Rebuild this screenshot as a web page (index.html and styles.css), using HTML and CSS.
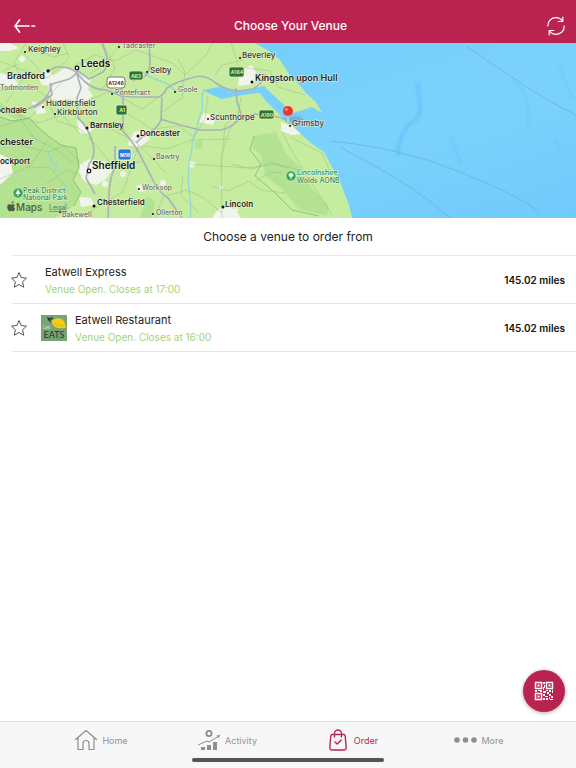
FILE: index.html
```html
<!DOCTYPE html>
<html lang="en">
<head>
<meta charset="utf-8">
<meta name="viewport" content="width=device-width, initial-scale=1">
<title>Choose Your Venue</title>
<link rel="stylesheet" href="styles.css">
</head>
<body>
<header class="topbar">
  <button class="icon-button" type="button" aria-label="Back">
    <svg width="24" height="18" viewBox="0 0 24 18" fill="none" stroke="#fff" stroke-width="1.700" stroke-linecap="round" stroke-linejoin="round"><path d="M6.500 3L2 9l4.500 6M2 9h14M19 9h2.500"/></svg>
  </button>
  <h1 class="title">Choose Your Venue</h1>
  <button class="icon-button" type="button" aria-label="Refresh">
    <svg width="20" height="22" viewBox="0 0 20 22" fill="none" stroke="#fff" stroke-width="1.200" stroke-linecap="round" stroke-linejoin="round"><path d="M1.800 11C1.500 6 5.500 2.700 10 2.700c3 0 5 1.300 6.500 3.500M16.800 2v4.500h-4.500M18.200 11c.3 5-3.700 8.300-8.200 8.300-3 0-5-1.300-6.500-3.500M3.200 20v-4.500h4.500"/></svg>
  </button>
</header>

<main>
  <svg class="map" viewBox="0 43 576 175" role="img" aria-label="Map of venues">
    <defs>
      <linearGradient id="sea" x1="0" y1="0" x2="1" y2="1"><stop offset="0" stop-color="#72cbfb"/><stop offset=".6" stop-color="#7bd2fc"/><stop offset="1" stop-color="#70cafb"/></linearGradient>
      <filter id="soft" x="-50%" y="-50%" width="200%" height="200%"><feGaussianBlur stdDeviation="1.500"/></filter>
    </defs>
    <rect y="43" width="576" height="175" fill="url(#sea)"/>
    <g fill="none" stroke="#52b8f2" filter="url(#soft)" opacity=".45">
      <path d="M418 82c0 18 6 30-3 38-8 6-17 14-17 36" stroke-width="4"/>
      <path d="M512 80c12 5 18 25 17 48M560 65c2 15 8 25 14 33M555 138l4 12M450 137l12 28" stroke-width="1.500"/>
    </g>
    <g fill="none" stroke="#579fc0" stroke-width=".6" opacity=".7">
      <path d="M466 46c35 23 70 50 110 69M330 141c50 5 87 14 130 31 35 14 60 26 78 39M340 147c40 22 76 40 110 71"/>
    </g>
    <path fill="#c6ec9f" d="M0 43h255l14 8 11 9 9 14 8 8 9 11 10 9 6 11-10-6-9 3-10 3-10-9-11-10-8-8-8 2-16 2-12-1-9-2-16 3 7 4 12 5 14-3 14-2 10-1 6 8 7 7 10 10 7 5 12 12 10 9 12 8 8 15 8 15 8 20 5 18H0z"/>
    <g fill="#a9df8c" opacity=".65">
      <path d="M0 117l12 4 17-3 12 12 10 8 10 7 15 3 3 19-6 13 8 12-7 14-20 12H0V193z"/>
      <path d="M254 136l22-4 10 22 14 13 12 21 17 18-2 10-27-6-18-21-17-13-4-20-8-8zM147 196l8 6-3 16h-12zM195 143l7-4v9l-7 1zM0 103l26 14-10 2-16-7z"/>
    </g>
    <g fill="#f1f4ec">
      <path d="M54 75l12-8 13 4 12 8-3 10 5 7-9 6-16-3-15 2-6-8zM38 77l9-8 7 7-3 10-9-1zM80 164l10-5 16 3 6 9-7 9-9 5-12-4-5-9zM0 73l12 3 7 8-8 5-11-3zM0 154l10 5 3 14-13 12zM134 132l12-3 4 10-10 8-13-2zM240 70l12-5 6 11-4 8-16 2zM204 113l13 3-4 9-14-3zM281 122l11 4 9 8-9 1-11-4zM214 214l9-8 12 3 6 9h-28zM0 43h10l9 5-9 3H0zM31 101l12 3 3 9-9 1zM77 119l10 8 8-1-7 8-9-1zM136 186l7-2 2 7-6 1zM190 161l6 2-3 5-5-2zM79 197l12 1 3 7-13 2z"/>
      <circle cx="22" cy="59" r="3"/><circle cx="123" cy="174" r="3"/><circle cx="221" cy="188" r="2"/><circle cx="163" cy="183" r="3"/><circle cx="236" cy="210" r="2"/><circle cx="105" cy="184" r="3"/>
    </g>
    <g fill="none" stroke="#8fd7db" stroke-width="1.200">
      <path d="M204 89c-5 12 2 18-4 26-3 14-5 20-8 27 2 10-5 18-3 28-4 15 5 31 1 48M48 152l5 13M57 164l-2 8M143 72c10 9 18 7 26 13l8 7"/>
    </g>
    <g fill="none" stroke="#93a982" stroke-width=".5" opacity=".75" stroke-linejoin="round">
      <path d="M0 61l23 9 25 8 21-20-6-15M26 43L14 63l8 17-16 23M0 91l28-5 28 15 21 1M48 101l9 20 22 7 19 19 13 17 31-2M0 126l30-8 15-18 16-17M46 78l-13-15-10-10M90 74l18-13 12-18M74 66l21-11 20 6 21-11 36 13 13 12 21-20 9-16M103 43l12 25-12 21M120 109l32 20 27-3 15 11 11-18 3-23M122 160l21-14 24 3 25-9 39-1M111 129l25 13 31 32M139 144l-9 27-7 21-21 12-22 14M155 218l8-21 24-7 17 8 18 15M190 164l58 4 26-4 27 6M222 218l-1-61 8-26 8-12 4-21M241 111l-16 14-4 46M231 43l8 24 31 4 8 16 27 8M12 154l18 14 19-1 17 20-2 31M0 179l30-13 17-25M19 116l15 22 23 12 16 13M91 99l20-8 31 18 24-17M183 175l-2 20 17 17M282 132l13 25 23 36 14 22M290 137l32 16 11 25"/>
      <path d="M20 145l28 7 16-6 20 20M10 110l28 13 24-8 18 19M35 48l18 9 16-4M3 71l15-7M46 184l21-14 14 6M215 75l7-10 21-5M231 164l22 5 18-7 16 6M257 181l13-9 13 1M211 186l17 5 21-10 12 9 24 3M178 59l7 13-3 26-20 14"/>
    </g>
    <g fill="none" stroke="#aab3b8" stroke-width="1.700" stroke-linejoin="round">
      <path d="M28 109Q46 101 49 92l3-8 14-4q6-1 12-9l11 8 14-7q7-8 3-18l-4-11M48 71l8-4q14-1 21 6l7 8q10 9 22 9l15 6 12 1h25q4 0 9-9 8-6 28-11 10-3 21 6 8 7 24 8l13-2q8-4 13-15M77 74l4 14-4 10 1 20q10 8 15 26 3 12-4 20l-3 14q5 9 9 16M50 83l2 12-18 13M162 97l-1 23q-3 9-19 17l-6 6M160 119l24 7 16 4h21q12-3 18-11l16-5 22 3q8 1 12 7M236 88l1 14 5 15M149 43l1 18q0 14-8 17l-10 3M119 79l4 16v36q6 6 15 20l14 27q6 14 16 20l14 20M115 146v20q-6 15-6 30l-1 22"/>
    </g>
    <path fill="none" stroke="#83b66c" stroke-width=".8" d="M0 117l12 4 17-3 12 12 10 8 10 7 15 3 3 19-6 13 8 12-7 14M254 136l-4 14 11 14-6 12 18 15 19 19 27 6"/>

    <g class="shields">
      <g fill="#24734a" stroke="#e9ed9e" stroke-width=".8"><rect x="129" y="71" width="14" height="9" rx="2"/><rect x="116" y="105" width="11" height="10" rx="2"/><rect x="229" y="67" width="15" height="10" rx="2"/><rect x="259" y="110" width="15" height="9" rx="2"/></g>
      <rect x="107" y="77" width="18" height="11" rx="3" fill="#fff" stroke="#777"/>
      <rect x="118" y="149" width="13" height="11" rx="2" fill="#2979db" stroke="#fff" stroke-width=".7"/>
      <g class="shield-text"><text x="136" y="78">A63</text><text x="122" y="112">A1</text><text x="237" y="74">A164</text><text x="267" y="117">A180</text></g>
      <text class="shield-dark" x="116" y="85">A1246</text>
      <text class="shield-light" x="125" y="157">M18</text>
    </g>
    <g fill="#111">
      <circle cx="25" cy="52" r="1"/><circle cx="48" cy="71" r="1.700"/><circle cx="43" cy="107" r="1"/><circle cx="55" cy="114" r="1"/><circle cx="87" cy="128" r="1.500"/><circle cx="119" cy="47" r="1"/><circle cx="147" cy="72" r="1"/><circle cx="112" cy="94" r="1"/><circle cx="175" cy="92" r="1"/><circle cx="208" cy="119" r="1"/><circle cx="138" cy="136" r="1.500"/><circle cx="240" cy="58" r="1"/><circle cx="252" cy="82" r="1.500"/><circle cx="290" cy="126" r="1"/><circle cx="154" cy="159" r="1"/><circle cx="139" cy="189" r="1"/><circle cx="94" cy="206" r="1.500"/><circle cx="153" cy="214" r="1"/><circle cx="223" cy="207" r="1.500"/><circle cx="60" cy="212" r="1"/>
      <g fill="#fff" stroke="#111" stroke-width="1.300"><circle cx="77" cy="68" r="1.800"/><circle cx="89" cy="171" r="1.800"/></g>
    </g>
    <g class="town">
      <text x="28" y="52">Keighley</text><text x="46" y="106">Huddersfield</text><text x="57" y="115">Kirkburton</text><text x="150" y="73">Selby</text><text x="210" y="120">Scunthorpe</text><text x="242" y="58">Beverley</text><text x="292" y="126">Grimsby</text>
      <g class="minor"><text x="0" y="90">Todmorden</text><text x="122" y="48">Tadcaster</text><text x="115" y="95">Pontefract</text><text x="178" y="92">Goole</text><text x="156" y="159">Bawtry</text><text x="142" y="190">Worksop</text><text x="156" y="215">Ollerton</text><text x="62" y="217">Bakewell</text></g>
    </g>
    <g class="large-town"><text x="90" y="128">Barnsley</text><text x="140" y="136">Doncaster</text><text x="97" y="205">Chesterfield</text><text x="225" y="207">Lincoln</text><text x="-4" y="113">ochdale</text><text x="0" y="164">ockport</text><g class="major"><text x="7" y="79">Bradford</text><text x="255" y="81">Kingston upon Hull</text></g></g>
    <g class="city"><text x="81" y="67">Leeds</text><text x="92" y="169">Sheffield</text><text class="chester" x="0" y="145">chester</text></g>
    <g class="park"><text x="23" y="193">Peak District</text><text x="23" y="200">National Park</text><text x="297" y="175">Lincolnshire</text><text x="297" y="183">Wolds AONB</text></g>
    <g fill="#35a653" stroke="#e5f6d5" stroke-width=".5"><circle cx="18" cy="193" r="5"/><circle cx="291" cy="176" r="5"/></g>
    <g fill="#fff"><path d="M18 189l-2.500 5h5zM17.500 194h1v2h-1z"/><ellipse cx="291" cy="175" rx="2.500" ry="2"/><path d="M290.500 176h1v3h-1z"/></g>
    <ellipse cx="294" cy="119" rx="9" ry="3" fill="#536a75" opacity=".3" filter="url(#soft)"/>
    <path d="M288 115v8" stroke="#eee"/>
    <circle cx="288" cy="111" r="5" fill="#ee352f"/><circle cx="286.500" cy="109.500" r="1.300" fill="#ff9b8b"/>
    <path fill="#4d5b43" d="M11.500 203.700c.1-1.500 1-2.300 2.100-2.700.1 1.500-.8 2.600-2.100 2.700zM11.200 204.700c.8 0 1.100-.5 2-.5.8 0 1.300.4 1.700.9-1.500 1-1.200 3.100.3 3.700-.6 1.500-1.300 2.500-2.100 2.500-.7 0-1-.4-1.800-.4s-1 .4-1.700.4c-1.800 0-3.500-5.200-1.300-6.700 1.200-.8 2.200.1 2.900.1z"/>
    <text class="maps-brand" x="16" y="211">Maps</text>
    <text class="legal" x="49" y="210">Legal</text>
  </svg>

  <section class="venues">
    <h2 class="prompt">Choose a venue to order from</h2>
    <ul class="list">
      <li class="venue">
        <button class="star" type="button" aria-label="Favourite Eatwell Express"><svg width="18" height="18" viewBox="0 0 18 18" fill="none" stroke="#555" stroke-linejoin="round"><path d="M9 1.500l2.200 5 5.300.6-3.900 3.700 1.100 5.400L9 13.500l-4.700 2.700 1.100-5.400-3.900-3.700 5.300-.6z"/></svg></button>
        <div class="details plain"><h3>Eatwell Express</h3><p>Venue Open. Closes at 17:00</p></div>
        <span class="distance">145.02 miles</span>
      </li>
      <li class="venue">
        <button class="star" type="button" aria-label="Favourite Eatwell Restaurant"><svg width="18" height="18" viewBox="0 0 18 18" fill="none" stroke="#555" stroke-linejoin="round"><path d="M9 1.500l2.200 5 5.300.6-3.900 3.700 1.100 5.400L9 13.500l-4.700 2.700 1.100-5.400-3.900-3.700 5.300-.6z"/></svg></button>
        <svg class="logo" width="26" height="26" viewBox="0 0 26 26"><rect width="26" height="26" fill="#76a477"/><path fill="#f5cb16" d="M11 6c2-3 8-4 11-1 2 2 2 4 3 8-4 0-8 1-11-1-2-1-3-3-3-6z"/><path fill="none" stroke="#c7a516" stroke-width=".5" d="M13 8c3 3 7 3 10 3"/><path fill="#253a2a" d="M6 2l3 1 3-1-1 3-2-1 1 4-3-3z"/><text class="logo-small" x="2" y="14">Les</text><text class="logo-name" x="13" y="23">EATS</text></svg>
        <div class="details"><h3>Eatwell Restaurant</h3><p>Venue Open. Closes at 16:00</p></div>
        <span class="distance">145.02 miles</span>
      </li>
    </ul>
  </section>
</main>

<button class="scan" type="button" aria-label="Scan QR code">
  <svg width="20" height="20" viewBox="0 0 20 20"><g fill="none" stroke="#fff" stroke-width="1.500"><path d="M1.500 1.500h6v6h-6zM12.500 1.500h6v6h-6zM1.500 12.500h6v6h-6z"/></g><path fill="#fff" d="M3.500 3.500h2v2h-2zM14.500 3.500h2v2h-2zM3.500 14.500h2v2h-2zM9 1h2v2H9zM10 4h1v3h-1zM9 6h1v3H9zM1 9h2v2H1zM4 9h4v1H4zM6 10h2v1H6zM9 10h3v2H9zM12 9h2v1h-2zM15 9h2v2h-2zM18 9h1v3h-1zM13 11h2v2h-2zM9 13h2v2H9zM11 15h3v1h-3zM9 17h2v2H9zM12 17h2v2h-2zM15 13h2v2h-2zM17 15h2v2h-2zM15 16h1v2h-1zM16 18h3v1h-3z"/></svg>
</button>

<nav class="tabs" aria-label="Main">
  <div class="tab-row">
    <a href="#home"><svg width="24" height="22" viewBox="0 0 24 22" fill="none" stroke="#8e8e8e" stroke-width="1.200" stroke-linejoin="round" stroke-linecap="round"><path d="M1.500 10.500L12 1.500l10.500 9M4 8.500v12h5v-6a3 3 0 0 1 6 0v6h5v-12"/></svg>Home</a>
    <a href="#activity"><svg width="24" height="22" viewBox="0 0 24 22" fill="#8e8e8e"><circle cx="12" cy="4.500" r="2.600" fill="none" stroke="#8e8e8e" stroke-width="1.800"/><path d="M4 18h4v3H4zM10 16h4v5h-4zM16 13h4v8h-4z"/><path d="M1 16l9-4 2 1 10-6" fill="none" stroke="#8e8e8e"/><path d="M19.500 6.500l4-.5-2 3z"/></svg>Activity</a>
    <a class="active" href="#order" aria-current="page"><svg width="20" height="24" viewBox="0 0 20 24" fill="none" stroke="#b52651" stroke-width="1.400" stroke-linejoin="round" stroke-linecap="round"><path d="M4.500 6.500h11q1.500 0 1.700 1.500l1 11.500q.1 2.500-2.200 2.500H4q-2.300 0-2.200-2.500l1-11.500q.2-1.500 1.700-1.500zM6.500 9V5.500a3.500 3.500 0 0 1 7 0V9M7 14l2.200 2 4-4"/></svg>Order</a>
    <a href="#more"><svg width="23" height="8" viewBox="0 0 23 8" fill="#8e8e8e"><circle cx="3" cy="4" r="2.800"/><circle cx="11.500" cy="4" r="2.800"/><circle cx="20" cy="4" r="2.800"/></svg>More</a>
  </div>
  <div class="home-bar"></div>
</nav>
</body>
</html>
```
FILE: styles.css
```css
* { box-sizing: border-box; }

body {
  display: flex;
  flex-direction: column;
  min-height: 100vh;
  margin: 0;
  background: #fff;
  color: #222;
  font-family: Inter, "Liberation Sans", sans-serif;
  font-size: 12px;
}

h1, h2, h3, p, ul { margin: 0; padding: 0; }
button { padding: 0; border: 0; background: none; cursor: pointer; }
svg { display: block; flex: none; }
main { flex: 1; }

.topbar {
  display: flex;
  align-items: center;
  justify-content: space-between;
  padding: 12px 8px 3px 13px;
  background: #ba234f;
}
.icon-button { display: grid; place-items: center; width: 24px; height: 28px; }
.title { color: #fff; font-size: 12px; font-weight: 500; line-height: 16px; }

.map { width: 100%; height: auto; }
.map text { paint-order: stroke; stroke: #eef6dc; stroke-width: 1px; stroke-linejoin: round; }
.town { fill: #333; font-size: 8px; font-weight: 500; }
.minor { fill: #687062; font-size: 7px; }
.large-town { fill: #222; font-size: 8px; font-weight: 600; }
.major { font-size: 9px; }
.city { fill: #111; font-size: 10px; font-weight: 600; }
.map .chester { font-size: 9px; }
.park { fill: #348b4c; font-size: 7px; font-weight: 500; }
.map .shields text { stroke: none; text-anchor: middle; font-size: 5px; font-weight: 700; }
.shield-text { fill: #e7ed70; }
.shield-dark { fill: #333; }
.shield-light { fill: #fff; }
.map .maps-brand { fill: #4d5b43; stroke: none; font-size: 10px; font-weight: 500; }
.map .legal { fill: #69785c; stroke: none; font-size: 7px; text-decoration: underline; }

.prompt {
  padding: 11px 12px 10px;
  font-size: 12px;
  font-weight: 400;
  line-height: 16px;
  text-align: center;
}
.list { margin-left: 12px; border-top: 1px solid #e8e8e8; list-style: none; }
.venue {
  display: flex;
  align-items: center;
  height: 48px;
  padding-right: 11px;
  border-bottom: 1px solid #e4e4e4;
}
.star { width: 18px; margin-left: -2px; margin-right: 13px; }
.logo { margin-right: 8px; }
.logo text { font-family: Lato, sans-serif; }
.logo-small { fill: #d4e4ce; font-size: 5px; }
.logo-name { fill: #203326; font-size: 9px; text-anchor: middle; }
.details { flex: 1; }
.plain { margin-left: 4px; }
.details h3 { font-size: 11px; font-weight: 400; line-height: 18px; }
.details p { color: #a6d374; font-size: 10px; line-height: 16px; }
.distance { color: #111; font-size: 10px; font-weight: 600; }

.scan {
  position: fixed;
  right: 11px;
  bottom: 56px;
  display: grid;
  place-items: center;
  width: 42px;
  height: 42px;
  border-radius: 50%;
  background: #ba234f;
  box-shadow: 0 1px 4px #0005;
}

.tabs { padding-bottom: 6px; border-top: 1px solid #e0e0e0; background: #f7f7f7; }
.tab-row { display: grid; grid-template-columns: repeat(4, 1fr); padding: 0 34px 0 38px; }
.tabs a {
  display: flex;
  align-items: center;
  justify-content: center;
  gap: 4px;
  height: 36px;
  color: #929292;
  font-size: 9px;
  text-decoration: none;
}
.tabs .active { gap: 6px; color: #b52651; }
.home-bar { width: 33.3%; height: 4px; margin: 0 auto; border-radius: 2px; background: #555; }
```
